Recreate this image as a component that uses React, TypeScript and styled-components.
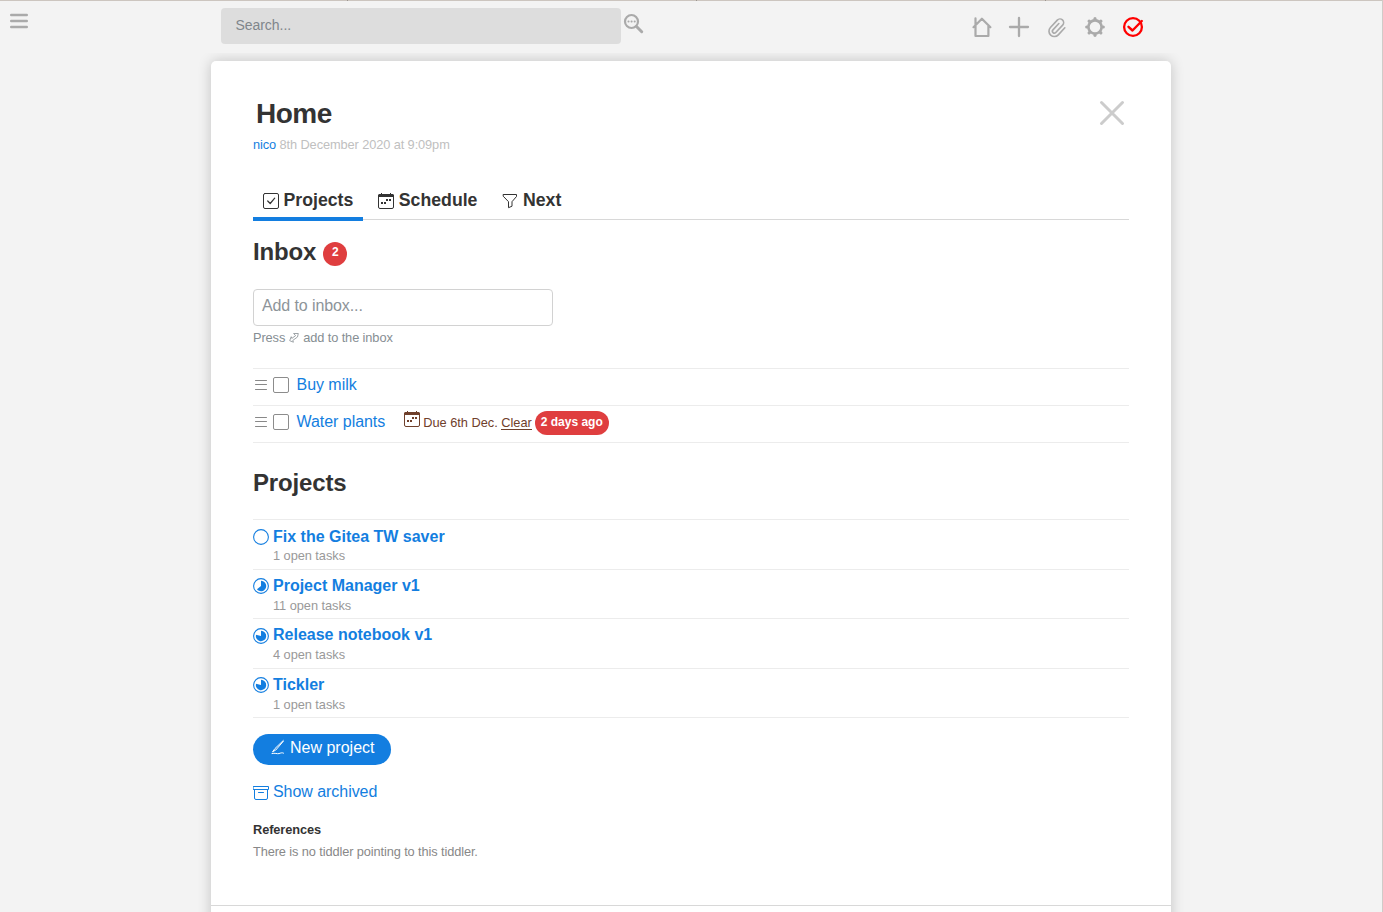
import React from 'react';
import styled, { createGlobalStyle } from 'styled-components';

const blue = '#137ee0';
const red = '#df3e3f';
const ink = '#333333';
const brown = '#6f402b';

const GlobalStyle = createGlobalStyle`
  * { box-sizing: border-box; }
  html, body { margin: 0; height: 100%; }
  body {
    background: #f3f3f3;
    color: ${ink};
    font-family: "Liberation Sans", Arial, sans-serif;
    font-size: 16px;
    overflow: hidden;
  }
  svg { display: block; flex: none; }
`;

const Page = styled.div`
  height: 912px;
  border-right: 1px solid #d0cbc8;
  overflow: hidden;
`;

const WindowEdge = styled.div`
  display: flex;
  gap: 348px;
  height: 1px;
  padding-left: 347px;
  background: #ccc5bf;
`;

const EdgeTick = styled.span`
  width: 1px;
  background: #9b958f;
`;

const TopBar = styled.header`
  position: relative;
  z-index: 1;
  display: flex;
  align-items: flex-start;
  height: 52px;
  padding: 7px 0 0 10px;
  background: #f3f3f3;
  color: #aaaaaa;
`;

const MenuButton = styled.div`
  width: 211px;
  padding-top: 5px;
`;

const Search = styled.div`
  width: 400px;
  height: 36px;
  padding: 0 14.5px;
  border-radius: 4px;
  background: #dddddd;
  color: #80868b;
  font-size: 14px;
  letter-spacing: -0.05px;
  line-height: 34px;
`;

const SearchButton = styled.div`
  padding: 4px 0 0 2px;
`;

const Tools = styled.nav`
  display: flex;
  gap: 14px;
  margin-left: 325px;
  padding-top: 7px;
`;

const Card = styled.main`
  width: 960px;
  height: 900px;
  margin: 8px 0 0 211px;
  border-radius: 5px;
  background: #ffffff;
  box-shadow: 0 0 14px rgba(0, 0, 0, 0.2);
`;

const Content = styled.div`
  height: 845px;
  padding: 32px 42px 0;
  border-bottom: 1px solid #d8d8d8;
`;

const TitleRow = styled.div`
  display: flex;
  justify-content: space-between;
  height: 40px;
  padding: 0 3px 0 3px;
`;

const Title = styled.h1`
  margin: 0;
  font-size: 28px;
  letter-spacing: -0.5px;
  line-height: 42px;
`;

const Close = styled.div`
  padding-top: 6px;
`;

const Subtitle = styled.div`
  height: 24px;
  color: #c0c0c0;
  font-size: 12.8px;
  letter-spacing: -0.1px;
  line-height: 23px;
  white-space: pre;
`;

const Author = styled.a`
  color: ${blue};
`;

const Tabs = styled.div`
  display: flex;
  gap: 5px;
  height: 37px;
  margin-top: 26px;
  border-bottom: 1px solid #d8d8d8;
`;

const Tab = styled.div<{ $active?: boolean }>`
  display: flex;
  gap: 4.5px;
  height: 38px;
  padding: 0 10px;
  border-bottom: 4px solid ${p => (p.$active ? blue : 'transparent')};
  font-size: 17.7px;
  font-weight: bold;
  line-height: 34px;
  svg { margin-top: 10px; }
`;

const Heading = styled.h2<{ $top: number }>`
  display: flex;
  align-items: center;
  gap: 7px;
  height: 32px;
  margin: ${p => p.$top}px 0 0;
  font-size: 24px;
  letter-spacing: -0.15px;
  line-height: 32px;
`;

const Count = styled.span`
  width: 24px;
  height: 24px;
  margin-top: 4px;
  border-radius: 12px;
  background: ${red};
  color: #ffffff;
  font-size: 12px;
  line-height: 21px;
  text-align: center;
`;

const InboxInput = styled.div`
  width: 300px;
  height: 37px;
  margin-top: 21px;
  padding: 0 8px;
  border: 1px solid #d2d2d2;
  border-radius: 4px;
  color: #8d9499;
  letter-spacing: -0.1px;
  line-height: 32px;
`;

const Hint = styled.div`
  display: flex;
  gap: 4px;
  height: 24px;
  color: #868e93;
  font-size: 12.8px;
  letter-spacing: -0.1px;
  line-height: 23px;
  svg { margin-top: 6px; }
`;

const TaskList = styled.div`
  margin-top: 18px;
  border-top: 1px solid #ececec;
`;

const Task = styled.div`
  display: flex;
  height: 37px;
  border-bottom: 1px solid #ececec;
`;

const Handle = styled.div`
  width: 20px;
  padding: 10px 0 0 2px;
`;

const Checkbox = styled.div`
  width: 16px;
  height: 16px;
  margin-top: 8px;
  border: 1px solid #8c8c8c;
  border-radius: 2px;
`;

const TaskName = styled.a`
  margin-left: 7.5px;
  color: ${blue};
  letter-spacing: -0.04px;
  line-height: 32px;
`;

const Due = styled.div`
  display: flex;
  margin-left: 18.5px;
  color: ${brown};
  font-size: 12.8px;
  letter-spacing: -0.02px;
  line-height: 33px;
  white-space: pre;
  svg { margin: 5px 3.5px 0 0; }
`;

const Clear = styled.span`
  height: 15px;
  margin-top: 9px;
  border-bottom: 1px solid ${brown};
  line-height: 15px;
`;

const Overdue = styled.span`
  height: 24px;
  margin: 5px 0 0 3px;
  padding: 0 6px;
  border-radius: 12px;
  background: ${red};
  color: #ffffff;
  font-size: 12px;
  font-weight: bold;
  letter-spacing: 0;
  line-height: 22px;
`;

const ProjectList = styled.div`
  margin-top: 20px;
  border-top: 1px solid #ececec;
`;

const ProjectName = styled.div`
  height: 21px;
  color: ${blue};
  font-weight: bold;
  line-height: 21px;
`;

const Project = styled.div`
  display: flex;
  gap: 4px;
  height: 49.5px;
  padding-top: 5.45px;
  border-bottom: 1px solid #ececec;
  svg { margin-top: 3.5px; }
  &:first-child { padding-top: 6px; }
  &:first-child svg { margin-top: 3px; }
  &:first-child ${ProjectName} { height: 20px; }
`;

const OpenTasks = styled.div`
  color: #999999;
  font-size: 12.8px;
  letter-spacing: -0.05px;
  line-height: 19px;
`;

const NewProject = styled.div`
  display: flex;
  gap: 4px;
  width: 138px;
  height: 31px;
  margin-top: 16px;
  padding-left: 17px;
  border-radius: 16px;
  background: ${blue};
  color: #ffffff;
  line-height: 27px;
  svg { margin-top: 5px; }
`;

const Archived = styled.div`
  display: flex;
  gap: 4px;
  height: 24px;
  margin-top: 15px;
  color: ${blue};
  letter-spacing: -0.05px;
  line-height: 23px;
  svg { margin-top: 5px; }
`;

const References = styled.h5`
  height: 22px;
  margin: 15px 0 0;
  font-size: 12.8px;
  letter-spacing: -0.1px;
  line-height: 22px;
`;

const Note = styled.p`
  margin: 0;
  color: #888888;
  font-size: 12.8px;
  letter-spacing: -0.11px;
  line-height: 22px;
`;

const stroke = (width: number) => ({
  fill: 'none',
  stroke: 'currentColor',
  strokeWidth: width,
  strokeLinecap: 'round' as const,
  strokeLinejoin: 'round' as const,
});

const CalendarIcon = () => (
  <svg width="16" height="16" viewBox="0 0 16 16">
    <rect x="0.5" y="1.5" width="15" height="14" rx="1.5" fill="none" stroke="currentColor" />
    <path d="M0 4V2.500Q0 1 1.500 1H3V0h1v1h8V0h1v1h1.500Q16 1 16 2.500V4z" fill="currentColor" />
    <path d="M3 9h2v2H3zM6 9h2v2H6zM8 6h2v2H8zM11 6h2v2h-2z" fill="currentColor" />
  </svg>
);

const ProgressIcon = ({ value }: { value: number }) => {
  const angle = value * 2 * Math.PI;
  const x = 8 + 5.2 * Math.sin(angle);
  const y = 8 - 5.2 * Math.cos(angle);
  return (
    <svg width="16" height="16" viewBox="0 0 16 16" color={blue}>
      <circle cx="8" cy="8" r="7.4" fill="none" stroke="currentColor" strokeWidth="1.1" />
      {value > 0 && (
        <path d={`M8 8V2.800A5.2 5.2 0 ${value > 0.5 ? 1 : 0} 1 ${x} ${y}z`} fill="currentColor" />
      )}
    </svg>
  );
};

const HandleIcon = () => (
  <svg width="12" height="12" viewBox="0 0 12 12">
    <path d="M.5 1.500h11M.5 5.500h11M.5 10.500h11" {...stroke(1)} stroke="#888" />
  </svg>
);

const teeth = [0, 45, 90, 135, 180, 225, 270, 315];

const projects = [
  { name: 'Fix the Gitea TW saver', open: 1, progress: 0 },
  { name: 'Project Manager v1', open: 11, progress: 0.64 },
  { name: 'Release notebook v1', open: 4, progress: 0.79 },
  { name: 'Tickler', open: 1, progress: 0.79 },
];

export default function App() {
  return (
    <>
      <GlobalStyle />
      <Page>
        <WindowEdge>
          <EdgeTick />
          <EdgeTick />
          <EdgeTick />
        </WindowEdge>
        <TopBar>
          <MenuButton>
            <svg width="18" height="16" viewBox="0 0 18 16">
              <path d="M1.200 2h15.600M1.200 8h15.600M1.200 14h15.600" {...stroke(2.4)} />
            </svg>
          </MenuButton>
          <Search>Search...</Search>
          <SearchButton>
            <svg width="22" height="22" viewBox="0 0 22 22">
              <circle cx="8.500" cy="9.500" r="6.500" {...stroke(2.2)} />
              <path d="M13.500 14.500l5.200 5.200" {...stroke(3)} />
              <path d="M5.400 9.500h6.400" {...stroke(1.9)} strokeDasharray="0.200 2.900" />
            </svg>
          </SearchButton>
          <Tools>
            <svg width="24" height="24" viewBox="0 0 24 24">
              <path d="M5.500 11V21h12.900V11M3.500 12.200L11.900 3.700 20.400 12.200M5.500 9.500V3.400" {...stroke(2.200)} />
            </svg>
            <svg width="24" height="24" viewBox="0 0 24 24">
              <path d="M11 3v18M2 12h18" {...stroke(2.3)} />
            </svg>
            <svg width="24" height="24" viewBox="0 0 24 24">
              <path
                d="M-2 -4.500V4.500a2 2 0 0 0 4 0V-6a3.800 3.800 0 0 0-7.600 0V4.500a5.600 5.600 0 0 0 11.200 0V-5.500"
                transform="translate(11.300 13) rotate(43) scale(.96)"
                {...stroke(1.7)}
              />
            </svg>
            <svg width="24" height="24" viewBox="0 0 24 24">
              <circle cx="11" cy="12" r="6.600" {...stroke(2.6)} />
              {teeth.map(a => (
                <path key={a} d="M11 4.500V3.700" transform={`rotate(${a} 11 12)`} {...stroke(3.2)} />
              ))}
            </svg>
            <svg width="24" height="24" viewBox="0 0 24 24" color="#ff0000">
              <circle cx="11" cy="12" r="8.900" {...stroke(2.3)} />
              <path d="M6.500 11.800l4 3.700 9.300-9.500" {...stroke(2.4)} />
            </svg>
          </Tools>
        </TopBar>
        <Card>
          <Content>
            <TitleRow>
              <Title>Home</Title>
              <Close>
                <svg width="28" height="28" viewBox="0 0 28 28" color="#cccccc">
                  <path d="M3.500 3.500l21 21M24.500 3.500l-21 21" {...stroke(3)} />
                </svg>
              </Close>
            </TitleRow>
            <Subtitle>
              <Author>nico</Author> 8th December 2020 at 9:09pm
            </Subtitle>
            <Tabs>
              <Tab $active>
                <svg width="16" height="16" viewBox="0 0 16 16">
                  <rect x="0.500" y="0.500" width="15" height="15" rx="1.500" {...stroke(1)} />
                  <path d="M4.700 8l2.500 2.500L11.700 5.200" {...stroke(1.2)} />
                </svg>
                Projects
              </Tab>
              <Tab>
                <CalendarIcon />
                Schedule
              </Tab>
              <Tab>
                <svg width="16" height="16" viewBox="0 0 16 16">
                  <path d="M1.500 1.500h13v2L10 8.700v4.500l-3.500 1.500v-6L1.500 3.500z" {...stroke(1)} />
                </svg>
                Next
              </Tab>
            </Tabs>
            <Heading $top={16}>
              Inbox <Count>2</Count>
            </Heading>
            <InboxInput>Add to inbox...</InboxInput>
            <Hint>
              Press
              <svg width="10" height="11" viewBox="0 0 10 11">
                <path d="M5 1.500h4.300L8.500 5 3.800 8.400l.6 1.800L.7 8.700l1.500-4 .6 1.700 3.500-2.500z" {...stroke(0.8)} />
              </svg>
              add to the inbox
            </Hint>
            <TaskList>
              <Task>
                <Handle><HandleIcon /></Handle>
                <Checkbox />
                <TaskName>Buy milk</TaskName>
              </Task>
              <Task>
                <Handle><HandleIcon /></Handle>
                <Checkbox />
                <TaskName>Water plants</TaskName>
                <Due>
                  <CalendarIcon />
                  {'Due 6th Dec. '}
                  <Clear>Clear</Clear>
                  <Overdue>2 days ago</Overdue>
                </Due>
              </Task>
            </TaskList>
            <Heading $top={24}>Projects</Heading>
            <ProjectList>
              {projects.map(p => (
                <Project key={p.name}>
                  <ProgressIcon value={p.progress} />
                  <div>
                    <ProjectName>{p.name}</ProjectName>
                    <OpenTasks>{p.open} open tasks</OpenTasks>
                  </div>
                </Project>
              ))}
            </ProjectList>
            <NewProject>
              <svg width="16" height="16" viewBox="0 0 16 16">
                <path d="M13.300 1.500L5 9.500l-2.500 3.300L5.800 11 13.300 2.300" {...stroke(1)} />
                <path d="M2 14.500c3-.8 5 .6 7 .1 1.500-.6 3-1.200 4.500-.5" {...stroke(1)} />
              </svg>
              New project
            </NewProject>
            <Archived>
              <svg width="16" height="16" viewBox="0 0 16 16">
                <path d="M.5 1.500h15v3H.5zM1.500 4.500V13a1.500 1.500 0 0 0 1.500 1.500h10a1.500 1.500 0 0 0 1.500-1.500V4.500M5.500 7.500h5" {...stroke(1)} />
              </svg>
              Show archived
            </Archived>
            <References>References</References>
            <Note>There is no tiddler pointing to this tiddler.</Note>
          </Content>
        </Card>
      </Page>
    </>
  );
}
